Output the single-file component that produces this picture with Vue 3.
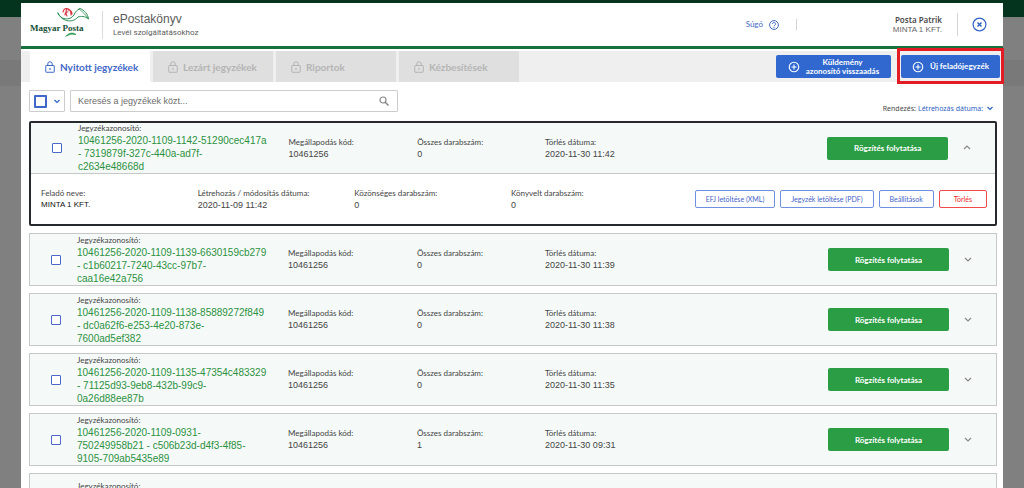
<script setup>
import { ref } from 'vue'

const tabs = ['Nyitott jegyzékek', 'Lezárt jegyzékek', 'Riportok', 'Kézbesítések']
const actions = ['EFJ letöltése (XML)', 'Jegyzék letöltése (PDF)', 'Beállítások', 'Törlés']
const query = ref('')

const records = ref([
  {
    id: '10461256-2020-1109-1142-51290cec417a\n- 7319879f-327c-440a-ad7f-\nc2634e48668d',
    code: '10461256', total: 0, expires: '2020-11-30 11:42', open: true,
    details: [
      { label: 'Feladó neve:', value: 'MINTA 1 KFT.', strong: true },
      { label: 'Létrehozás / módosítás dátuma:', value: '2020-11-09 11:42' },
      { label: 'Közönséges darabszám:', value: '0' },
      { label: 'Könyvelt darabszám:', value: '0' },
    ],
  },
  { id: '10461256-2020-1109-1139-6630159cb279\n- c1b60217-7240-43cc-97b7-\ncaa16e42a756', code: '10461256', total: 0, expires: '2020-11-30 11:39' },
  { id: '10461256-2020-1109-1138-85889272f849\n- dc0a62f6-e253-4e20-873e-\n7600ad5ef382', code: '10461256', total: 0, expires: '2020-11-30 11:38' },
  { id: '10461256-2020-1109-1135-47354c483329\n- 71125d93-9eb8-432b-99c9-\n0a26d88ee87b', code: '10461256', total: 0, expires: '2020-11-30 11:35' },
  { id: '10461256-2020-1109-0931-\n750249958b21 - c506b23d-d4f3-4f85-\n9105-709ab5435e89', code: '10461256', total: 1, expires: '2020-11-30 09:31' },
  { id: '10461256-2020-1109-0928-\n1840c27be513', code: '10461256', total: 0, expires: '2020-11-30 09:28' },
])
</script>

<template>
  <div class="backdrop">
    <div class="site-bar"></div>
    <div class="site-band"></div>
    <main class="modal">
      <header class="head">
        <svg class="logo" viewBox="0 0 60 36" role="img" aria-label="Magyar Posta">
          <text x="0" y="24" class="logo-text">Magyar Posta</text>
          <g fill="none" stroke-linecap="round" stroke-linejoin="round">
            <path d="M28 6C30 13 40 14 44 8C45 5 47 3 50 1.500C54 3 58 7 58.500 12C55 9 51 9 48 10C42 17 31 14 28 6" stroke="#2f8f55" stroke-width="1" />
            <path d="M49 2C52 4 56 8 58 11.500" stroke="#2f8f55" stroke-width="0.800" />
            <path d="M36 29Q41 24 46 27.500Q41 26 36 29" stroke="#2f9a55" fill="#2f9a55" stroke-width="0.800" />
            <path d="M33 5Q34 1 37 1.500Q41 2 41 8M35 8Q35 4.500 38 5M38 3Q42 3 42 7M37 1.500Q35 5 37 9" stroke="#d8323c" stroke-width="1.100" />
          </g>
        </svg>
        <div class="titles">
          <h1>ePostakönyv</h1>
          <p>Levél szolgáltatásokhoz</p>
        </div>
        <a class="help" href="#">
          Súgó
          <svg width="10" height="10" viewBox="0 0 20 20" fill="none" stroke="currentColor" stroke-width="2">
            <circle cx="10" cy="10" r="8.800" />
            <path d="M7 8a3 3 0 1 1 4.500 2.600Q10 11.500 10 12.600M10 14v2" />
          </svg>
        </a>
        <div class="user">
          <strong>Posta Patrik</strong>
          <span>MINTA 1 KFT.</span>
        </div>
        <button class="close" aria-label="Bezárás">
          <svg width="15" height="15" viewBox="0 0 30 30" fill="none" stroke="currentColor" stroke-width="2.400">
            <circle cx="15" cy="15" r="12.800" />
            <path d="M11 11l8 8M19 11l-8 8" stroke-width="3" />
          </svg>
        </button>
      </header>

      <div class="tabbar">
        <nav class="tabs" role="tablist">
          <button v-for="(tab, i) in tabs" :key="tab" role="tab" class="tab" :class="{ active: i === 0 }" :aria-selected="i === 0">
            <svg width="10" height="12" viewBox="0 0 20 24" fill="none" stroke="currentColor" stroke-width="2">
              <rect x="1.500" y="9" width="17" height="13.500" rx="1" />
              <path d="M5.500 9V6a4.500 4.500 0 0 1 9 0v3" />
              <circle cx="10" cy="16" r="1" />
            </svg>
            {{ tab }}
          </button>
        </nav>
        <button class="primary wide">
          <svg width="12" height="12" viewBox="0 0 24 24" fill="none" stroke="currentColor" stroke-width="2.200">
            <circle cx="12" cy="12" r="9.500" /><path d="M12 7v10M7 12h10" />
          </svg>
          <span>Küldemény<br>azonosító visszaadás</span>
        </button>
        <div class="marked">
          <button class="primary">
            <svg width="12" height="12" viewBox="0 0 24 24" fill="none" stroke="currentColor" stroke-width="2.200">
              <circle cx="12" cy="12" r="9.500" /><path d="M12 7v10M7 12h10" />
            </svg>
            <span>Új feladójegyzék</span>
          </button>
        </div>
      </div>

      <div class="toolbar">
        <div class="bulk">
          <input type="checkbox" class="check large" aria-label="Összes kijelölése">
          <button class="plain" aria-label="Kijelölési lehetőségek">
            <svg width="8" height="8" viewBox="0 0 8 8" fill="none" stroke="currentColor" stroke-width="1.200"><path d="M1.500 3L4 5.500L6.500 3" /></svg>
          </button>
        </div>
        <label class="search">
          <input v-model="query" type="text" placeholder="Keresés a jegyzékek közt..." aria-label="Keresés">
          <svg width="12" height="12" viewBox="0 0 12 12" fill="none" stroke="currentColor" stroke-width="1.200"><circle cx="5" cy="5" r="3" /><path d="M7.200 7.200l3.300 3.300" stroke-width="1.500" /></svg>
        </label>
        <div class="sort">
          <label for="sort">Rendezés:</label>
          <select id="sort"><option>Létrehozás dátuma:</option></select>
          <svg width="8" height="8" viewBox="0 0 8 8" fill="none" stroke="currentColor" stroke-width="1.200"><path d="M1.500 3L4 5.500L6.500 3" /></svg>
        </div>
      </div>

      <section class="list">
        <article v-for="r in records" :key="r.id" class="card" :class="{ open: r.open }">
          <div class="summary">
            <input type="checkbox" class="check" :aria-label="r.id">
            <div class="field">
              <span class="label">Jegyzékazonosító:</span>
              <a href="#" class="ident">{{ r.id }}</a>
            </div>
            <div class="field"><span class="label">Megállapodás kód:</span><span>{{ r.code }}</span></div>
            <div class="field"><span class="label">Összes darabszám:</span><span>{{ r.total }}</span></div>
            <div class="field"><span class="label">Törlés dátuma:</span><span>{{ r.expires }}</span></div>
            <button class="continue">Rögzítés folytatása</button>
            <button class="plain toggle" aria-label="Részletek" @click="r.open = !r.open">
              <svg width="10" height="10" viewBox="0 0 10 10" fill="none" stroke="currentColor" stroke-width="1.200">
                <path :d="r.open ? 'M2 6L5 3L8 6' : 'M2 3L5 6L8 3'" />
              </svg>
            </button>
          </div>
          <div v-if="r.open && r.details" class="details">
            <div v-for="d in r.details" :key="d.label" class="field">
              <span class="label">{{ d.label }}</span>
              <span :class="{ strong: d.strong }">{{ d.value }}</span>
            </div>
            <div class="actions">
              <button v-for="a in actions" :key="a" :class="{ danger: a === 'Törlés' }">{{ a }}</button>
            </div>
          </div>
        </article>
      </section>
    </main>
  </div>
</template>

<style>
body { margin: 0; }
</style>

<style scoped>
* { box-sizing: border-box; }
button, input, select { font-family: inherit; margin: 0; }
button { cursor: pointer; }
svg { flex: none; display: block; }
.backdrop {
  position: relative;
  height: 100vh;
  overflow: hidden;
  background: #808080;
  padding: 3px 21px 0;
  font-family: Lato, "Liberation Sans", sans-serif;
  font-size: 9px;
  color: #4a4a4a;
}
.site-bar { position: absolute; top: 0; left: 0; right: 0; height: 17px; background: #04341d; }
.site-band { position: absolute; top: 60px; left: 0; right: 0; height: 26px; background: #797979; }
.modal { position: relative; min-height: 100vh; background: #fff; }
.head {
  display: flex;
  align-items: center;
  height: 46px;
  padding: 0 16px 0 9px;
  border-bottom: 3px solid #18703d;
}
.logo { width: 60px; height: 36px; }
.logo-text { font-family: "Liberation Serif", serif; font-weight: bold; font-size: 9px; fill: #164f35; }
.titles {
  margin-left: 12px;
  padding-left: 10px;
  border-left: 1px solid #dcdcdc;
  font-family: "Liberation Sans", Arial, sans-serif;
  color: #5c5c5c;
}
h1 { margin: 0; font-size: 12px; line-height: 16px; font-weight: normal; }
.titles p { margin: 0; font-family: Roboto, sans-serif; font-size: 8px; line-height: 12px; }
.help {
  display: flex;
  align-items: center;
  gap: 6px;
  margin-left: auto;
  padding-right: 17px;
  border-right: 1px solid #d4d4d4;
  color: #4169c4;
  text-decoration: none;
  font-size: 8px;
  line-height: 11px;
}
.user {
  display: flex;
  flex-direction: column;
  justify-content: center;
  width: 161px;
  height: 23px;
  padding-right: 15px;
  border-right: 1px solid #d4d4d4;
  text-align: right;
  font-size: 8px;
  line-height: 10px;
}
.user strong { font-family: "Noto Sans", sans-serif; font-weight: 600; }
.user span { font-family: "Liberation Sans", sans-serif; color: #666; }
.close { border: 0; background: none; padding: 0; margin-left: 14px; color: #2f62c4; }
.tabbar {
  display: flex;
  align-items: center;
  height: 31px;
  margin-top: 2px;
  padding: 0 3px 0 9px;
  background: #efefef;
}
.tabs { display: flex; gap: 3px; height: 100%; margin-right: auto; }
.tab {
  display: flex;
  align-items: center;
  gap: 5px;
  width: 120px;
  padding: 0 0 0 15px;
  border: 0;
  background: #dfdfdf;
  color: #b4b4b4;
  font-size: 10px;
  font-weight: bold;
  white-space: nowrap;
}
.tab.active { background: #fff; color: #3f68c8; }
.primary {
  display: flex;
  align-items: center;
  justify-content: center;
  gap: 6px;
  width: 99px;
  height: 23px;
  padding: 0;
  border: 0;
  border-radius: 2px;
  background: #3068d0;
  color: #fff;
  font-size: 8px;
  line-height: 9px;
  font-weight: bold;
}
.primary.wide { width: 115px; margin-right: 10px; }
.marked { position: relative; }
.marked::after { content: ""; position: absolute; inset: -7px -4px -6px -4px; border: 3px solid #e21b24; pointer-events: none; }
.toolbar { display: flex; align-items: stretch; height: 22px; margin: 8px 9px 9px 8px; }
.bulk { display: flex; align-items: center; gap: 6px; width: 36px; padding-left: 4px; border: 1px solid #ccc; border-radius: 1px; color: #2f62c4; }
.check {
  appearance: none;
  width: 10px;
  height: 10px;
  border: 1px solid #4a68c8;
  background: #fff;
  border-radius: 1px;
}
.check.large { width: 13px; height: 13px; border: 2px solid #3f68c8; }
.plain { border: 0; background: none; padding: 0; color: inherit; }
.search {
  display: flex;
  align-items: center;
  width: 328px;
  margin-left: 5px;
  padding: 0 7px;
  border: 1px solid #ccc;
  border-radius: 1px;
  color: #888;
}
.search input { flex: 1; min-width: 0; border: 0; padding: 0; outline: 0; background: none; font: 9px "Liberation Sans", sans-serif; }
.search input::placeholder { color: #6c6c6c; }
.sort { display: flex; align-items: center; align-self: flex-end; gap: 2px; height: 8px; margin-left: auto; font-family: "Noto Sans", sans-serif; font-size: 7px; }
.sort select { appearance: none; border: 0; padding: 0; background: none; color: #2f62c4; font-size: 7px; }
.sort svg { color: #2f62c4; }
.list { display: grid; gap: 7px; margin: 0 6px 0 8px; }
.card { border: 1px solid #c4c8c6; background: #f5faf8; }
.card.open { border: 2px solid #26292e; border-radius: 2px; }
.summary {
  display: grid;
  grid-template-columns: 47fr 211fr 129fr 128fr 283fr 121fr 47fr;
  align-items: center;
  min-height: 51px;
}
.open .summary { min-height: 50px; }
.summary .check { justify-self: end; margin-right: 16px; }
.field {
  display: flex;
  flex-direction: column;
  font-family: "Liberation Sans", Arial, sans-serif;
  line-height: 12px;
  color: #444;
}
.label { font-family: Lato, sans-serif; font-size: 8px; line-height: 11px; }
.ident { font-size: 10px; line-height: 13px; color: #2c913f; text-decoration: none; white-space: pre-line; }
.continue { height: 23px; border: 0; border-radius: 2px; background: #2a9d45; color: #fff; font-size: 8px; font-weight: bold; }
.toggle { justify-self: start; margin-left: 14px; color: #888; }
.details {
  display: grid;
  grid-template-columns: repeat(4, 157fr) 320fr;
  align-items: center;
  min-height: 51px;
  padding: 0 8px 0 10px;
  border-top: 1px solid #c4c8c6;
  background: #fff;
}
.strong { color: #111; font-size: 8px; }
.actions { display: flex; justify-content: flex-end; gap: 5px; }
.actions button {
  height: 18px;
  padding: 0 10px;
  border: 1px solid #6f8fe0;
  border-radius: 2px;
  background: #fff;
  color: #3f62c8;
  font-size: 7px;
  white-space: nowrap;
}
.actions .danger { border-color: #f04a4a; color: #e22; padding: 0 14px; }
</style>
